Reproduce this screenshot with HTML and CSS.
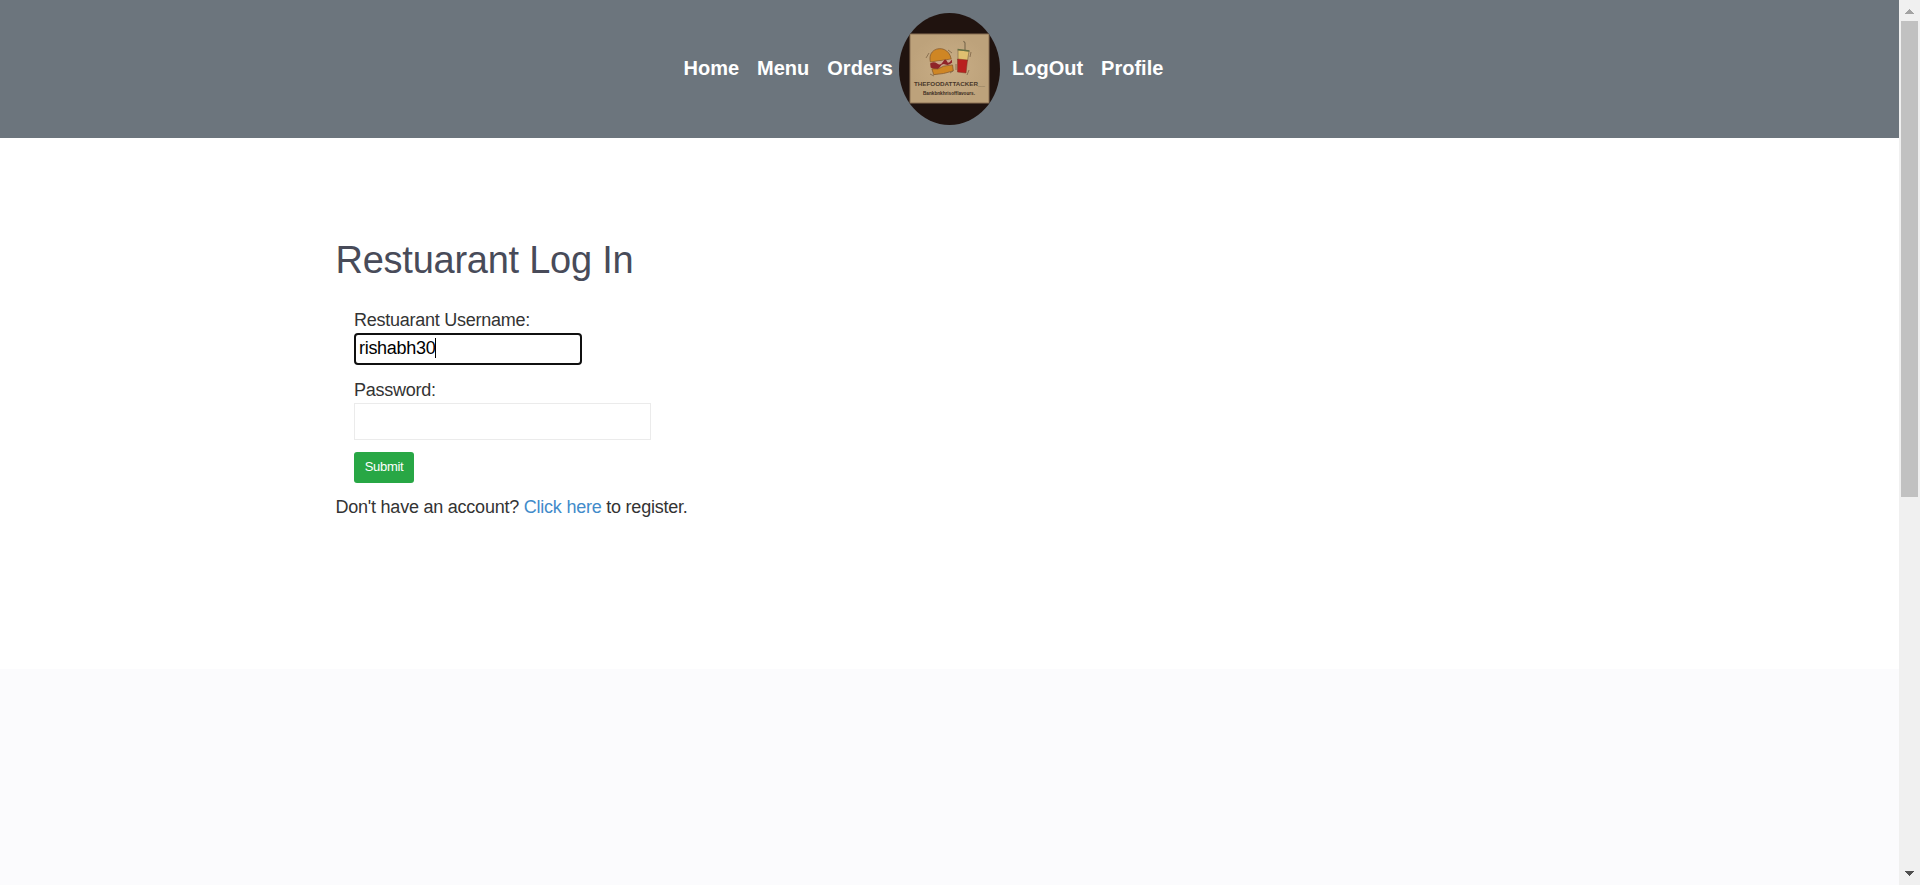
FILE: index.html
```html
<!DOCTYPE html>
<html lang="en">
<head>
<meta charset="utf-8">
<title>Restuarant Log In</title>
<link rel="stylesheet" href="styles.css">
</head>
<body>
<div class="page">
  <header class="header">
    <nav class="nav nav-left"><a>Home</a><a>Menu</a><a>Orders</a></nav>
    <svg class="logo" width="101" height="112" viewBox="0 0 101 112">
      <defs>
        <clipPath id="oval"><ellipse cx="50.5" cy="56" rx="50.5" ry="56"/></clipPath>
        <radialGradient id="paper"><stop offset="0" stop-color="#c9ae86"/><stop offset="1" stop-color="#bda27b"/></radialGradient>
      </defs>
      <g clip-path="url(#oval)">
        <rect width="101" height="112" fill="#20130f"/>
        <rect x="11" y="21" width="79" height="69" fill="url(#paper)" stroke="#8a7154"/>
        <g transform="rotate(-8 42 49)">
          <path d="M31.500 47.500C30 31.500 52 31.500 52.500 47.500Z" fill="#cf8624" stroke="#85572a" stroke-width=".7"/>
          <path d="M32 48h20v6H32z" fill="#cba58a"/>
          <path d="M31 49q4-2 7 1t6-1 4 0 5-1v3q-4 3-7 1t-6 2-9-1z" fill="#8f2429"/>
          <path d="M32 54.500l6 1 6-2 9 0v6q-10 2-20 1z" fill="#cf8624" stroke="#85572a" stroke-width=".7"/>
        </g>
        <path d="M30 40l-3 5M49 37l4 3M31 61l4 2M51 60l3-2" fill="none" stroke="#7d6548" stroke-width=".8"/>
        <path d="M66 37V30l-1.500-2" fill="none" stroke="#7d6c50" stroke-width="1.200"/>
        <path d="M59 37l11 1-1.500 10-9.500-1z" fill="#dfc070" stroke="#846f47" stroke-width=".7"/>
        <path d="M58.500 46l10 1-1.500 13-8.500-1z" fill="#b9201e" stroke="#7d3a28" stroke-width=".5"/>
        <path d="M58.500 36.500l12 1.500" stroke="#667044" stroke-width="1.500"/>
        <path d="M72 39l-1 5M57 51v6M70 57l-2 5" stroke="#7d6548" stroke-width=".8"/>
        <text class="logo-name" x="15" y="73" textLength="71" lengthAdjust="spacingAndGlyphs">THEFOODATTACKER__</text>
        <text class="logo-tag" x="24" y="82" textLength="52" lengthAdjust="spacingAndGlyphs">Bankbnkhrisofflavours.</text>
      </g>
    </svg>
    <nav class="nav nav-right"><a>LogOut</a><a>Profile</a></nav>
  </header>
  <main class="main">
    <h1 class="title">Restuarant Log In</h1>
    <form class="form">
      <label class="label">Restuarant Username:</label>
      <div class="field field-focused">rishabh30<span class="caret"></span></div>
      <label class="label">Password:</label>
      <div class="field field-password"></div>
      <button class="submit" type="button">Submit</button>
    </form>
    <p class="register">Don't have an account? <a class="link">Click here</a> to register.</p>
  </main>
</div>
<aside class="scrollbar">
  <svg width="21" height="21" viewBox="0 0 21 21" shape-rendering="crispEdges"><path d="M6 14l4.500-5 4.500 5z" fill="#a3a3a3"/></svg>
  <div class="thumb"></div>
  <svg class="arrow-down" width="21" height="21" viewBox="0 0 21 21" shape-rendering="crispEdges"><path d="M6 7l4.500 5 4.500-5z" fill="#505050"/></svg>
</aside>
</body>
</html>
```
FILE: styles.css
```css
* { box-sizing: border-box; }
body {
  margin: 0;
  display: flex;
  height: 885px;
  overflow: hidden;
  background: #fbfbfd;
  color: #333;
  font-family: "Liberation Sans", Arial, sans-serif;
  font-size: 18px;
  line-height: 20px;
  letter-spacing: -0.25px;
}
.page { width: 1899px; }
.header {
  display: flex;
  align-items: center;
  height: 138px;
  padding-left: 683.5px;
  background: #6c757d;
}
.nav {
  display: flex;
  gap: 18px;
  color: #fff;
  font-size: 20px;
  font-weight: bold;
  line-height: 24px;
  letter-spacing: 0;
  padding-bottom: 2px;
}
.nav-left { width: 215.5px; }
.nav-right { margin-left: 12px; }
.logo { flex: none; letter-spacing: 0; }
.logo-name { font-size: 6px; font-weight: bold; fill: #49382a; }
.logo-tag { font-size: 5.5px; font-weight: bold; fill: #382a20; }
.main {
  height: 531px;
  padding: 101px 0 0 335.5px;
  background: #fff;
}
.title {
  margin: 0 0 29px;
  color: #484b59;
  font-size: 38px;
  font-weight: normal;
  line-height: 42px;
}
.form {
  display: flex;
  flex-direction: column;
  align-items: flex-start;
  padding-left: 18.5px;
}
.field { margin-top: 3px; background: #fff; }
.field-focused {
  display: flex;
  width: 228px;
  height: 32px;
  margin-bottom: 15px;
  padding: 3px;
  border: 2px solid #101010;
  border-radius: 4px;
  color: #000;
  letter-spacing: -0.3px;
}
.caret { width: 1px; height: 20px; background: #000; }
.field-password {
  width: 297px;
  height: 37px;
  margin-bottom: 12px;
  border: 1px solid #ebebeb;
}
.submit {
  width: 60px;
  height: 31px;
  padding: 0 0 2px;
  border: 0;
  border-radius: 3px;
  background: #28a745;
  color: #fff;
  font: 13px/20px "Liberation Sans", Arial, sans-serif;
  letter-spacing: -0.3px;
}
.register { margin: 14px 0 0; letter-spacing: -0.23px; }
.link { color: #428bca; }
.scrollbar {
  display: flex;
  flex-direction: column;
  align-items: flex-start;
  width: 21px;
  background: #f0f0f0;
}
.thumb { width: 17px; height: 476px; margin-left: 2px; background: #c1c1c1; }
.arrow-down { margin-top: auto; }
```
